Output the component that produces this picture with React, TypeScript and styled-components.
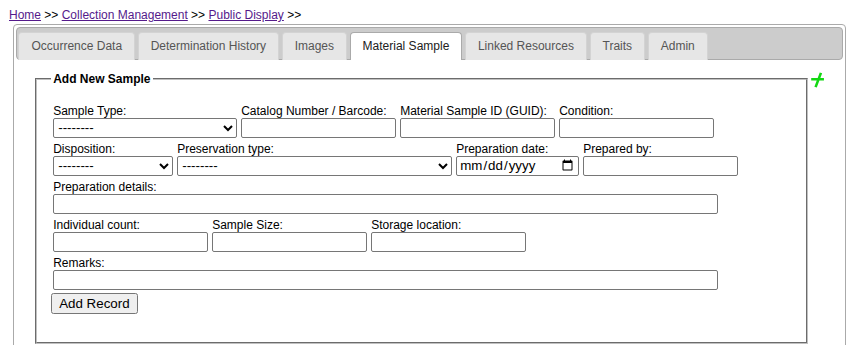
import React from 'react'
import styled, { createGlobalStyle } from 'styled-components'

const GlobalStyle = createGlobalStyle`
  body {
    margin: 0;
    background: #fff;
    font-family: "Liberation Sans", Arial, sans-serif;
    font-size: 12px;
    color: #000;
  }

  input, select, button {
    font-family: "Liberation Sans", Arial, sans-serif;
    font-size: 13.33px;
  }
`

const Page = styled.div`
  padding-top: 8px;
`

const Breadcrumb = styled.div`
  padding-left: 9px;
  line-height: 14px;

  a {
    color: #551a8b;
    text-decoration: underline;
  }
`

const TabsContainer = styled.div`
  box-sizing: border-box;
  margin: 2px 0 0 13px;
  width: 833px;
  padding: 2.4px;
  border: 1px solid #aaa;
  border-radius: 4px;
  background: #fff;
`

const TabNav = styled.div`
  display: flex;
  gap: 2.6px;
  padding: 2.4px 2.4px 0 1px;
  background: #ccc;
  border: 1px solid #aaa;
  border-radius: 4px;
`

const Tab = styled.div<{ $active?: boolean }>`
  margin: 1px 0 -1px;
  padding: 6px 12px ${p => (p.$active ? '7px' : '6px')};
  border: 1px solid ${p => (p.$active ? '#aaa' : '#d3d3d3')};
  border-bottom-width: 0;
  border-radius: 4px 4px 0 0;
  background: ${p => (p.$active ? '#fff' : '#e6e6e6')};
  color: ${p => (p.$active ? '#212121' : '#555')};
  line-height: 14px;
  white-space: nowrap;
  cursor: pointer;
`

const Panel = styled.div`
  display: flex;
  align-items: flex-start;
  padding: 12px 16.8px;
`

const FieldSet = styled.fieldset`
  box-sizing: border-box;
  width: 776px;
  margin: 0 2px;
  padding: 17px 16px 28px;
  border: 2px groove #c0c0c0;
`

const Legend = styled.legend`
  margin-left: -2px;
  padding: 0 2px;
  font-weight: bold;
  line-height: 14px;
`

const AddIcon = styled.svg`
  display: block;
`

const Row = styled.div`
  display: flex;
  gap: 4px;
  margin-bottom: 3px;
`

const Field = styled.div`
  display: flex;
  flex-direction: column;
`

const Label = styled.label`
  display: block;
  line-height: 15px;
  padding-top: 1px;
  margin-bottom: -1px;
  white-space: nowrap;
`

const TextInput = styled.input<{ $w: number }>`
  box-sizing: border-box;
  width: ${p => p.$w}px;
  height: 20px;
  margin: 0;
  padding: 1px 2px;
  border: 1px solid #767676;
  border-radius: 2px;
`

const Select = styled.select<{ $w: number }>`
  box-sizing: border-box;
  width: ${p => p.$w}px;
  height: 20px;
  margin: 0;
  border: 1px solid #767676;
  border-radius: 2px;
  background: #fff;
`

const SubmitButton = styled.button`
  margin: 0 0 0 -2px;
  height: 21px;
  padding: 1px 6px;
`

const tabs = [
  'Occurrence Data',
  'Determination History',
  'Images',
  'Material Sample',
  'Linked Resources',
  'Traits',
  'Admin',
]

function TextField({ label, w }: { label: string; w: number }) {
  return (
    <Field>
      <Label>{label}</Label>
      <TextInput type="text" $w={w} />
    </Field>
  )
}

function SelectField({ label, w }: { label: string; w: number }) {
  return (
    <Field>
      <Label>{label}</Label>
      <Select $w={w} defaultValue="">
        <option value="">--------</option>
      </Select>
    </Field>
  )
}

export default function App() {
  return (
    <Page>
      <GlobalStyle />
      <Breadcrumb>
        <a href="#">Home</a> &gt;&gt; <a href="#">Collection Management</a> &gt;&gt;{' '}
        <a href="#">Public Display</a> &gt;&gt;
      </Breadcrumb>
      <TabsContainer>
        <TabNav>
          {tabs.map(t => (
            <Tab key={t} $active={t === 'Material Sample'}>
              {t}
            </Tab>
          ))}
        </TabNav>
        <Panel>
          <FieldSet>
            <Legend>Add New Sample</Legend>
            <Row>
              <SelectField label="Sample Type:" w={184} />
              <TextField label="Catalog Number / Barcode:" w={155} />
              <TextField label="Material Sample ID (GUID):" w={155} />
              <TextField label="Condition:" w={155} />
            </Row>
            <Row>
              <SelectField label="Disposition:" w={120} />
              <SelectField label="Preservation type:" w={275} />
              <Field>
                <Label>Preparation date:</Label>
                <TextInput type="date" $w={123} />
              </Field>
              <TextField label="Prepared by:" w={155} />
            </Row>
            <Row>
              <TextField label="Preparation details:" w={665} />
            </Row>
            <Row>
              <TextField label="Individual count:" w={155} />
              <TextField label="Sample Size:" w={155} />
              <TextField label="Storage location:" w={155} />
            </Row>
            <Row>
              <TextField label="Remarks:" w={665} />
            </Row>
            <SubmitButton type="button">Add Record</SubmitButton>
          </FieldSet>
          <AddIcon width="16" height="16" viewBox="0 0 16 16">
            <path d="M11 0.8 L5.6 15.2 M1.2 7.3 L14 7.3" stroke="#12d812" strokeWidth="2.6" fill="none" />
          </AddIcon>
        </Panel>
      </TabsContainer>
    </Page>
  )
}
